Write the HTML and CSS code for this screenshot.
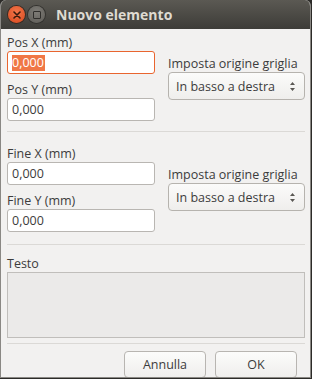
FILE: index.html
```html
<!DOCTYPE html>
<html lang="it">
<head>
    <meta charset="UTF-8">
    <title>Nuovo elemento</title>
    <link rel="stylesheet" href="styles.css">
</head>
<body>
    <div class="window">
        <div class="titlebar">
            <span class="btn-close">
                <svg width="8" height="8" viewBox="0 0 8 8"><path d="M1 1L7 7M7 1L1 7" stroke="#3a1a0c" stroke-width="1.6" stroke-linecap="round"/></svg>
            </span>
            <span class="btn-max"><span class="max-box"></span></span>
            <span class="title">Nuovo elemento</span>
        </div>

        <div class="content">
            <!-- Posizione -->
            <div class="group">
                <div class="fields">
                    <label class="lbl">Pos X (mm)</label>
                    <div class="input focused"><span class="sel">0,000</span></div>
                    <label class="lbl lbl-next">Pos Y (mm)</label>
                    <div class="input">0,000</div>
                </div>
                <div class="origin">
                    <label class="lbl">Imposta origine griglia</label>
                    <div class="combo">
                        <span>In basso a destra</span>
                        <svg class="arrows" width="7" height="11" viewBox="0 0 7 11"><path d="M3.5 1L6 4H1Z M3.5 10L6 7H1Z" fill="#5a5854"/></svg>
                    </div>
                </div>
            </div>

            <div class="sep sep-top"></div>

            <!-- Fine -->
            <div class="group">
                <div class="fields">
                    <label class="lbl">Fine X (mm)</label>
                    <div class="input">0,000</div>
                    <label class="lbl lbl-next">Fine Y (mm)</label>
                    <div class="input">0,000</div>
                </div>
                <div class="origin">
                    <label class="lbl">Imposta origine griglia</label>
                    <div class="combo">
                        <span>In basso a destra</span>
                        <svg class="arrows" width="7" height="11" viewBox="0 0 7 11"><path d="M3.5 1L6 4H1Z M3.5 10L6 7H1Z" fill="#5a5854"/></svg>
                    </div>
                </div>
            </div>

            <div class="sep sep-mid"></div>

            <label class="lbl">Testo</label>
            <div class="textbox"></div>

            <div class="sep sep-bottom"></div>

            <div class="buttons">
                <div class="button">Annulla</div>
                <div class="button">OK</div>
            </div>
        </div>
    </div>
</body>
</html>
```

FILE: styles.css
```css
body {
    margin: 0;
    background: #2c2b28;
    font-family: 'Open Sans', sans-serif;
    font-size: 12.5px;
    color: #3c3c3c;
}

.window {
    width: 309px;
    height: 377px;
    background: #f2f1f0;
    border: 1px solid #8a8884;
    border-top: none;
    border-radius: 6px 6px 0 0;
    overflow: hidden;
}

.titlebar {
    height: 29px;
    display: flex;
    align-items: center;
    background: linear-gradient(#5b5953, #3d3c38);
    padding-left: 7px;
}

.btn-close {
    width: 17px;
    height: 17px;
    border-radius: 50%;
    background: radial-gradient(circle at 50% 35%, #f3764a, #d9471c);
    box-shadow: 0 0 0 1px #3a2a22;
    display: flex;
    align-items: center;
    justify-content: center;
}

.btn-max {
    width: 17px;
    height: 17px;
    margin-left: 3px;
    border-radius: 50%;
    background: radial-gradient(circle at 50% 35%, #7e7c77, #5d5b56);
    box-shadow: 0 0 0 1px #33322f;
    display: flex;
    align-items: center;
    justify-content: center;
}

.max-box {
    width: 6px;
    height: 6px;
    border: 1px solid #2f2e2b;
    border-radius: 1px;
}

.title {
    margin-left: 11px;
    color: #dfdbd2;
    font-weight: 700;
    font-size: 14px;
}

.content {
    padding: 6px 5px 0 6px;
}

.group {
    display: flex;
    align-items: center;
    gap: 13px;
}

.fields {
    width: 148px;
    display: flex;
    flex-direction: column;
}

.origin {
    flex: 1;
    display: flex;
    flex-direction: column;
}

.lbl {
    display: block;
    height: 15px;
    line-height: 15px;
    margin-bottom: 1px;
    white-space: nowrap;
}

.lbl-next {
    margin-top: 8px;
}

.input {
    height: 21px;
    line-height: 21px;
    border: 1px solid #b9b6b2;
    border-radius: 3px;
    background: #fff;
    padding-left: 4px;
}

.input.focused {
    border-color: #e9652f;
}

.sel {
    background: #f07746;
    color: #fff;
    display: inline-block;
    line-height: 16px;
    padding-right: 1px;
}

.combo {
    height: 26px;
    border: 1px solid #b6b3ae;
    border-radius: 4px;
    background: linear-gradient(#fbfbfa, #efeeec);
    padding: 0 8px 0 7px;
    display: flex;
    align-items: center;
    justify-content: space-between;
}

.sep {
    height: 1px;
    background: #dbd9d6;
}

.sep-top {
    margin: 10px 0 14px;
}

.sep-mid {
    margin: 12px 0 11px;
}

.sep-bottom {
    margin: 5px 0 7px;
}

.textbox {
    height: 64px;
    border: 1px solid #c0bebb;
    background: #ebeae9;
}

.buttons {
    display: flex;
    justify-content: flex-end;
    gap: 9px;
    padding-right: 8px;
}

.button {
    width: 80px;
    height: 25px;
    line-height: 25px;
    text-align: center;
    border: 1px solid #b8b5b1;
    border-radius: 4px;
    background: linear-gradient(#fcfcfb, #efeeec);
}
```
